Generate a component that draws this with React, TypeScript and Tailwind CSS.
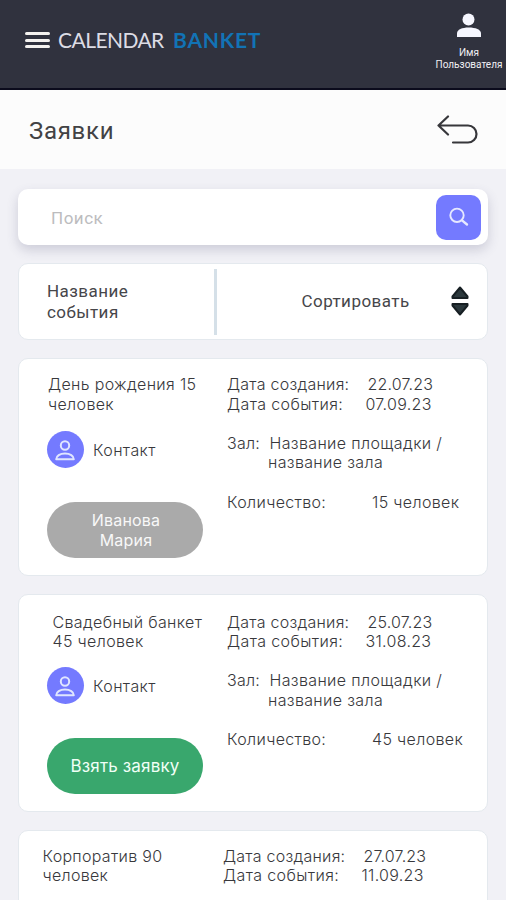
import { clsx } from "clsx";

type Request = {
  title: [string, string];
  created: string;
  event: string;
  count?: string;
  assignee?: [string, string];
  cardOffset: string;
  titleOffset: string;
  detailsOffset: string;
};

const requests: Request[] = [
  {
    title: ["День рождения 15", "человек"],
    created: "22.07.23",
    event: "07.09.23",
    count: "15 человек",
    assignee: ["Иванова", "Мария"],
    cardOffset: "pt-[16px]",
    titleOffset: "pl-[29px] tracking-[0.35px]",
    detailsOffset: "pl-[208px]",
  },
  {
    title: ["Свадебный банкет", "45 человек"],
    created: "25.07.23",
    event: "31.08.23",
    count: "45 человек",
    cardOffset: "pt-[17.500px]",
    titleOffset: "pl-[33.500px] tracking-[0.35px]",
    detailsOffset: "pl-[208px]",
  },
  {
    title: ["Корпоратив 90", "человек"],
    created: "27.07.23",
    event: "11.09.23",
    cardOffset: "pt-[15.500px]",
    titleOffset: "pl-[23.500px] tracking-[0.3px]",
    detailsOffset: "pl-[204px]",
  },
];

function Header() {
  return (
    <header className="flex h-[90px] shrink-0 justify-between border-b-2 border-[#0b0b1c] bg-[#30323e]">
      <div className="flex h-[80px] items-center pl-[25px]">
        <button aria-label="Меню" className="flex w-[25px] flex-col gap-[3.500px]">
          <span className="h-[3px] rounded-sm bg-[#f4f2ef]" />
          <span className="h-[3px] rounded-sm bg-[#f4f2ef]" />
          <span className="h-[3px] rounded-sm bg-[#f4f2ef]" />
        </button>
        <div className="flex pl-[8px] font-[Lato,sans-serif] text-[21px] leading-6 whitespace-nowrap">
          <span className="w-[115px] tracking-[-0.550px] text-[#dcdce4]">CALENDAR</span>
          <span className="font-bold tracking-[0.800px] text-[#1273b5]">BANKET</span>
        </div>
      </div>
      <div className="flex w-[74px] flex-col items-center pt-[13px]">
        <svg viewBox="0 0 26 25" className="h-[25px] w-[26px]" fill="#f6f7ff">
          <circle cx="12.5" cy="6.5" r="6" />
          <path d="M1 24v-3.500C1 16.500 6 14.500 12.800 14.500S25 16.500 25 20.500V24z" />
        </svg>
        <p className="pt-[9px] text-center font-[Roboto,sans-serif] text-[10px] leading-[12px] text-[#f0f0f4]">
          Имя
          <br />
          Пользователя
        </p>
      </div>
    </header>
  );
}

function TitleBar() {
  return (
    <div className="flex h-[79px] shrink-0 items-center justify-between bg-[#fcfcfc] pr-[28px] pl-[29px]">
      <h1 className="pt-[2px] font-[Roboto,sans-serif] text-[24px] tracking-[0.700px] text-[#424244]">Заявки</h1>
      <button aria-label="Назад">
        <svg viewBox="0 0 41 30" className="h-[30px] w-[41px]" fill="none" stroke="#37373b" strokeWidth="2.200" strokeLinecap="round" strokeLinejoin="round">
          <path d="M11 1.500 1.500 10.500 11 19.500M1.500 10.500H31a8.500 8.500 0 0 1 0 17H16" />
        </svg>
      </button>
    </div>
  );
}

function SearchBar() {
  return (
    <div className="flex h-[56px] shrink-0 items-center justify-between rounded-[10px] bg-white pr-[7px] pl-[33px] shadow-[0_5px_12px_rgba(60,60,100,0.2)]">
      <span className="pt-[3px] font-[Roboto,sans-serif] text-[17px] tracking-[0.5px] text-[#bcbcbe]">Поиск</span>
      <button aria-label="Найти" className="flex size-[45px] items-center justify-center rounded-[10px] bg-[#747aff]">
        <svg viewBox="0 0 20 20" className="size-5" fill="none" stroke="#e6e9ff" strokeLinecap="round">
          <circle cx="8" cy="8.300" r="6.700" strokeWidth="1.900" />
          <path d="m13 13.300 5 4.200" strokeWidth="2.400" />
        </svg>
      </button>
    </div>
  );
}

function SortBar() {
  return (
    <div className="mt-[18px] flex h-[77px] shrink-0 items-center rounded-[10px] border border-[#e4e9ee] bg-white font-[Roboto,sans-serif] text-[17px] tracking-[0.450px] text-[#46464a]">
      <p className="w-[195px] pl-[28px] leading-[21px]">
        Название
        <br />
        события
      </p>
      <div className="h-[66px] w-[3px] bg-[#d5e0e8]" />
      <span className="w-[234px] pt-px pl-[84.500px]">Сортировать</span>
      <svg viewBox="0 0 18 30" className="-mt-px h-[30px] w-[18px]" fill="#2b383c" stroke="#171f23" strokeWidth="2" strokeLinejoin="round">
        <path d="M9 1.500 16.500 10.500v1.500h-15v-1.500z" />
        <path d="M9 28.500 16.500 19.500V18h-15v1.500z" />
      </svg>
    </div>
  );
}

function ContactIcon() {
  return (
    <span className="flex size-[37px] items-center justify-center rounded-full bg-[#747aff]">
      <svg viewBox="0 0 20 21" className="mt-px mr-px h-[21px] w-[20px]" fill="none" stroke="#e0e6ff" strokeWidth="2" strokeLinejoin="round">
        <circle cx="10" cy="5.500" r="4.200" />
        <path d="M1.200 19.300C1.200 16 5 13.600 10 13.600S18.800 16 18.800 19.300z" />
      </svg>
    </span>
  );
}

function RequestCard({ request }: { request: Request }) {
  const { title, created, event, count, assignee, cardOffset, titleOffset, detailsOffset } = request;

  return (
    <article
      className={clsx(
        "grid h-[218px] shrink-0 grid-cols-1 content-start rounded-[10px] border border-[#e4e9ee] bg-white font-[Inter,sans-serif] text-[16px] leading-[19.6px] font-light whitespace-nowrap text-[#38383c]",
        cardOffset
      )}
    >
      <div className="col-start-1 row-start-1">
        <h2 className={clsx("h-[40px]", titleOffset)}>
          {title[0]}
          <br />
          {title[1]}
        </h2>
        {count && (
          <>
            <div className={clsx("flex items-center gap-[9px] pl-[28px]", assignee ? "pt-[16px]" : "pt-[14.500px]")}>
              <ContactIcon />
              <span className="pt-[2px] tracking-[0.4px]">Контакт</span>
            </div>
            <button
              className={clsx(
                "mt-[34px] ml-[28px] h-[56px] w-[156px] rounded-full font-normal",
                assignee
                  ? "bg-[#aaaaaa] pt-px pl-[2px] tracking-[0.2px] text-[#f8f8f8]"
                  : "bg-[#39a76d] pt-px text-[17px] tracking-[0.150px] text-[#f0fff6]"
              )}
            >
              {assignee ? (
                <>
                  {assignee[0]}
                  <br />
                  {assignee[1]}
                </>
              ) : (
                "Взять заявку"
              )}
            </button>
          </>
        )}
      </div>
      <div className={clsx("pointer-events-none col-start-1 row-start-1 tracking-[0.250px]", detailsOffset)}>
        <p className="flex">
          <span className="w-[140.500px]">Дата создания:</span>
          <span className="tracking-[0.15px]">{created}</span>
        </p>
        <p className="flex">
          <span className="w-[138.500px] tracking-[0.4px]">Дата события:</span>
          <span className="tracking-[0.3px]">{event}</span>
        </p>
        {count && (
          <>
            <p className="flex pt-[19.600px]">
              <span className="w-[42.500px]">Зал:</span>
              <span className="tracking-[0.36px]">Название площадки /</span>
            </p>
            <p className="pl-[41px] tracking-[0.350px]">название зала</p>
            <p className="flex pt-[19.600px]">
              <span className="w-[145px] tracking-[0.350px]">Количество:</span>
              <span className="tracking-[0.350px]">{count}</span>
            </p>
          </>
        )}
      </div>
    </article>
  );
}

export default function App() {
  return (
    <div className="flex h-[900px] w-[506px] flex-col overflow-hidden bg-[#f1f1f6]">
      <Header />
      <TitleBar />
      <main className="flex min-h-0 flex-1 flex-col px-[18px] pt-[20px]">
        <SearchBar />
        <SortBar />
        <div className="mt-[18px] flex flex-col gap-[18px]">
          {requests.map((request) => (
            <RequestCard key={request.created} request={request} />
          ))}
        </div>
      </main>
    </div>
  );
}
